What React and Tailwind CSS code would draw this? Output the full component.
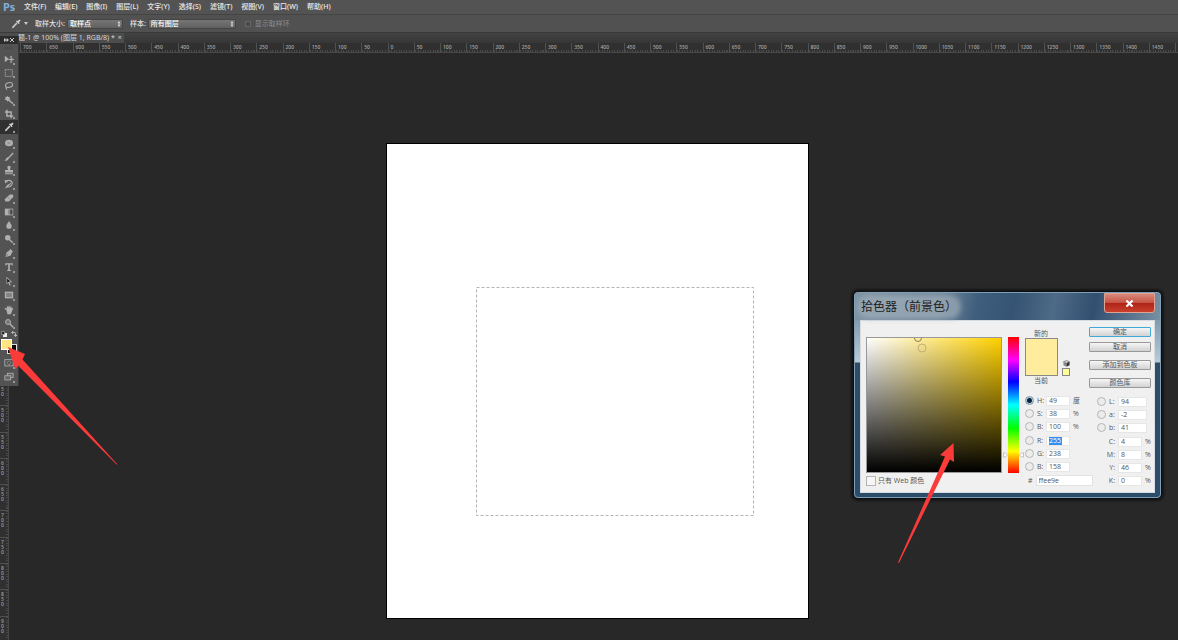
import React, { useState } from "react";

const menus = [
  "文件(F)",
  "编辑(E)",
  "图像(I)",
  "图层(L)",
  "文字(Y)",
  "选择(S)",
  "滤镜(T)",
  "视图(V)",
  "窗口(W)",
  "帮助(H)",
];

const toolGroups = [
  { size: "h-[82px]", tools: ["move", "marquee", "lasso", "wand", "crop", "eyedropper"] },
  {
    size: "h-[110px] mt-[2px]",
    tools: ["heal", "brush", "stamp", "history", "eraser", "gradient", "blur", "dodge"],
  },
  { size: "h-[56px]", tools: ["pen", "type", "path", "shape"] },
  { size: "h-[27px] mt-px", tools: ["hand", "zoom"] },
];

// 12x12 drawings, filled with currentColor unless they set their own stroke
const glyphs = {
  move: (
    <>
      <path d="M1 2v8l5-4z" />
      <path d="M8.500 3v6M5.500 6.500h6" stroke="currentColor" strokeWidth="1.300" />
      <path d="M8.500 2l1.500 2h-3zM8.500 11L7 9h3zM12 6.500L10 8V5z" />
    </>
  ),
  marquee: (
    <rect x="1.500" y="2" width="8.500" height="8" fill="none" stroke="currentColor" strokeDasharray="1.800 .8" />
  ),
  lasso: (
    <g fill="none" stroke="currentColor" strokeWidth="1.400">
      <ellipse cx="6" cy="4.800" rx="4.300" ry="2.800" transform="rotate(-14 6 4.800)" />
      <path d="M3 7c-1.500 1 .5 2 0 3.500" />
    </g>
  ),
  wand: (
    <>
      <path d="M5 5.500l6 5" stroke="currentColor" strokeWidth="1.700" />
      <path d="M4 .8l1 1.700 2-.4-.5 1.900L8 5.500l-2.200.2L4 8 3 6 .5 5.500 2 4 1.300 2.100l1.900.4z" />
    </>
  ),
  crop: (
    <path d="M3.500 1v7.500H11M1 3.500h7.500V11" fill="none" stroke="currentColor" strokeWidth="1.800" />
  ),
  eyedropper: (
    <>
      <path d="M7 1.800l1 .7L9.600 1c1.300-.6 2.200.5 1.500 1.500L9.500 4.200l.8 1-1 1-3.400-3.400z" />
      <path d="M7 5L2 10.200" stroke="currentColor" strokeWidth="1.900" />
      <path d="M1 11.300l.6-2 1.300 1.300z" />
    </>
  ),
  heal: (
    <>
      <ellipse cx="6" cy="6" rx="4.800" ry="4" />
      <path d="M4 4.800l4 2.400M4 7.200l4-2.400" stroke="#888" strokeWidth=".8" />
    </>
  ),
  brush: (
    <>
      <path d="M11 1.200L5 7.500" stroke="currentColor" strokeWidth="1.600" />
      <path d="M5.800 7.200C5.300 10.300 2.800 10.800.5 10.500 2.600 9.500 2 7 4.300 6.200z" />
    </>
  ),
  stamp: <path d="M6 .8c1.600 0 2.200 1.100 1.900 2.300L7.200 6h3.600v3H1.200V6h3.600l-.7-2.900C3.800 1.900 4.400.8 6 .8zM1.200 10h9.600v1.200H1.200z" />,
  history: (
    <>
      <path d="M2 3c2-2 6-1.800 7.500.5S8.500 9.500 5 9.500" fill="none" stroke="currentColor" strokeWidth="1.300" />
      <path d="M.8 1l.5 4.300 3.400-2.200zM11 3L5.500 8.500C5 10.500 3 11.300 1 11 3 10 2.500 8 4.300 7z" />
    </>
  ),
  eraser: (
    <>
      <path d="M7 1.800h3.700l.6 2.700-5.300 5.700H1.500L.8 7.500z" />
      <path d="M4.200 4.500l3 3.500" stroke="#777" strokeWidth=".7" />
    </>
  ),
  gradient: (
    <>
      <rect x="1" y="2" width="10" height="8" />
      <rect x="5" y="3" width="3" height="6" fill="#888" />
      <rect x="7.500" y="3" width="2.700" height="6" fill="#444" />
    </>
  ),
  blur: <path d="M6 1c.8 2.600 3.300 4 3.300 6.400C9.300 9.300 8 10.500 6 10.500S2.700 9.300 2.700 7.400C2.700 5 5.200 3.600 6 1z" />,
  dodge: (
    <>
      <circle cx="4.500" cy="4.500" r="3.300" />
      <path d="M6.500 6.500l4 4" stroke="currentColor" strokeWidth="1.700" />
    </>
  ),
  pen: (
    <>
      <path d="M7.500 1l3.500 3.500-1.500 1L8 9l-6.500 2L3.200 5 6.500 3z" />
      <path d="M1.500 11L5 7" stroke="#555" strokeWidth=".7" />
    </>
  ),
  type: <path d="M1.500 1.500h9v2.700h-1L9 3H7v6.500l1.500.5v.8h-5V10L5 9.500V3H3l-.5 1.200h-1z" />,
  path: (
    <>
      <path d="M3 1l7 6.500H6.800L8 11 6.500 11.500 5.200 8.200 3 10z" />
      <path d="M3.800 3l3.800 3.500L5.500 7l-1.700 1.500z" fill="#111" />
    </>
  ),
  shape: (
    <>
      <rect x="1" y="2" width="10" height="8" />
      <rect x="2.500" y="3.500" width="7" height="5" fill="#858585" />
    </>
  ),
  hand: (
    <path d="M2.800 6L1 4.700c-.5-1 .5-1.500 1.200-1l1.300.9L3.300 2c.2-.8 1-.8 1.300-.1L5 3.500l.3-2c.3-.7 1.200-.7 1.400 0L7 3.600l.9-1.800c.4-.5 1.200-.2 1.200.5L9 4.300l1-.8c.7-.2 1.200.4.9 1L9 9l-.6 2.200H4.200z" />
  ),
  zoom: (
    <>
      <circle cx="4.800" cy="4.800" r="3" fill="#777" stroke="currentColor" strokeWidth="1.200" />
      <path d="M7 7l4 4" stroke="currentColor" strokeWidth="1.800" />
    </>
  ),
  mask: (
    <>
      <rect x="1" y="2" width="10" height="7.500" fill="none" stroke="currentColor" />
      <circle cx="6" cy="5.800" r="2" fill="none" stroke="currentColor" strokeDasharray="1 .6" />
    </>
  ),
  screen: (
    <g fill="#666" stroke="currentColor">
      <rect x="4" y="1.500" width="7" height="5" />
      <rect x="1" y="4.500" width="7" height="5" />
    </g>
  ),
};

const Glyph = ({ name, className = "w-[10px] h-[10px]" }) => (
  <svg viewBox="0 0 12 12" fill="currentColor" className={className} aria-hidden="true">
    {glyphs[name]}
  </svg>
);

const Tool = ({ name, active, onClick }) => (
  <button
    aria-label={name}
    onClick={onClick}
    className={`relative flex-1 flex items-center justify-center ${
      active ? "bg-[#303030] text-[#d0d0d0]" : "text-[#b0b0b0]"
    }`}
  >
    <Glyph name={name} />
    <span className="absolute right-[3px] bottom-px size-[2px] bg-[#989898]" />
  </button>
);

const OptionSelect = ({ id, label, value, className }) => (
  <>
    <label htmlFor={id} className="shrink-0">
      {label}
    </label>
    <div className={`relative ml-[2px] shrink-0 ${className}`}>
      <select
        id={id}
        className="block w-full h-[10px] pl-[2px] appearance-none rounded-[1px] border border-[#454545] bg-linear-to-b from-[#767676] to-[#606060] text-[7px] leading-[8px] text-white"
      >
        <option>{value}</option>
      </select>
      <svg viewBox="0 0 4 6" className="absolute right-[2px] top-[2px] w-[4px] h-[6px] fill-[#ddd]">
        <path d="M2 0l1.500 2.500h-3zM2 6L.5 3.500h3z" />
      </svg>
    </div>
  </>
);

const OptionsBar = () => (
  <div className="flex items-center h-[19px] pl-[11px] border-t border-[#444] border-b border-b-[#3a3a3a] bg-[#515151] text-[7px] leading-[10px] font-medium text-[#e2e2e2]">
    <Glyph name="eyedropper" className="w-[10px] h-[10px] text-[#ccc]" />
    <svg viewBox="0 0 4 3" className="ml-[3px] mr-[7px] w-[4px] h-[3px] fill-[#ccc]">
      <path d="M0 0h4L2 3z" />
    </svg>
    <OptionSelect id="sample-size" label="取样大小:" value="取样点" className="w-[56px]" />
    <span className="w-[7px]" />
    <OptionSelect id="sample-from" label="样本:" value="所有图层" className="w-[88px]" />
    <label className="flex items-center gap-1 ml-[9px] text-[#8c8c8c] font-normal">
      <input
        type="checkbox"
        disabled
        className="appearance-none size-[6px] border border-[#666] bg-[#4a4a4a]"
      />
      显示取样环
    </label>
  </div>
);

const rulerMarks = Array.from({ length: 44 }, (_, i) => Math.abs(i * 50 - 700));

const TopRuler = () => (
  <div className="h-[10px] overflow-hidden border-b border-[#484848] bg-[#303030]">
    <div className="flex ml-5">
      {rulerMarks.map((mark, i) => (
        <div
          key={i}
          className="flex-1 h-[9px] pl-[2px] border-l border-[#505050] bg-[repeating-linear-gradient(90deg,#484848_0_1px,transparent_1px_10%)] bg-size-[100%_2px] bg-bottom bg-no-repeat text-[5px] leading-[8px] font-medium text-[#a8a8a8]"
        >
          {mark}
        </div>
      ))}
      <div className="w-[3px] border-l border-[#505050]" />
    </div>
  </div>
);

const sideMarks = [450, 500, 550, 600, 650, 700, 750, 800, 850, 900];

const SideRuler = () => (
  <div className="flex flex-col w-[9px] h-full pt-[326px] overflow-hidden border-r border-[#484848] bg-[#303030]">
    <div className="flex flex-col h-[263px] shrink-0">
      {sideMarks.map((mark) => (
        <div
          key={mark}
          className="flex-1 pl-px pt-[2px] border-t border-[#505050] bg-[repeating-linear-gradient(180deg,#484848_0_1px,transparent_1px_10%)] bg-size-[2px_100%] bg-right bg-no-repeat text-[5px] leading-[5px] font-medium text-[#a0a0a0]"
        >
          {String(mark)
            .split("")
            .map((digit, i) => (
              <div key={i}>{digit}</div>
            ))}
        </div>
      ))}
    </div>
  </div>
);

const Toolbox = () => {
  const [active, setActive] = useState("eyedropper");

  return (
    <div className="absolute left-0 top-[36px] z-10 flex flex-col w-[19px] h-[350px] border-r border-[#3a3a3a] bg-[#535353]">
      <div className="flex items-center justify-between h-[8px] px-1 bg-[#2c2c2c] text-[#c8c8c8]">
        <svg viewBox="0 0 5 4" className="w-[5px] h-[4px] fill-current">
          <path d="M0 0l2.500 2L0 4zM2.500 0L5 2 2.500 4z" />
        </svg>
        <svg viewBox="0 0 4 4" className="w-[4px] h-[4px] stroke-current">
          <path d="M0 0l4 4M4 0L0 4" />
        </svg>
      </div>
      <div className="h-[8px] pt-[3px] px-[5px]">
        <div className="h-[2px] bg-[repeating-linear-gradient(90deg,#444_0_1px,transparent_1px_2px)]" />
      </div>
      {toolGroups.map((group) => (
        <div key={group.tools[0]} className={`flex flex-col shrink-0 ${group.size}`}>
          {group.tools.map((name) => (
            <Tool key={name} name={name} active={name === active} onClick={() => setActive(name)} />
          ))}
        </div>
      ))}
      <div className="flex justify-between h-[8px] pt-px px-px text-[#c4c4c4]">
        <svg viewBox="0 0 6 6" className="size-[6px]">
          <path d="M2 2h4v4H2z" fill="#eee" />
          <path d="M.5.5h3v3h-3z" fill="#222" stroke="#aaa" strokeWidth=".7" />
        </svg>
        <svg viewBox="0 0 6 6" className="size-[6px] fill-none stroke-current">
          <path d="M1 1.500h2.500q1 0 1 1V5M2.200 0L.7 1.500 2.200 3M3 4l1.500 1.500L6 4" strokeWidth=".9" />
        </svg>
      </div>
      <div className="relative h-[17px]">
        <button aria-label="背景色" className="absolute left-[7px] top-[6px] size-[10px] border border-[#ddd] bg-[#0c0c0c]" />
        <button aria-label="前景色" className="absolute left-px top-px size-[11px] border border-white bg-[#ffe682]" />
      </div>
      <div className="flex flex-col flex-1 pt-px pb-[2px]">
        <Tool name="mask" />
        <Tool name="screen" />
      </div>
    </div>
  );
};

const DialogButton = ({ children, primary, className = "" }) => (
  <button
    className={`h-[10px] rounded-[1px] border bg-linear-to-b from-[#f6f6f6] to-[#d2d2d2] text-[7px] leading-[8px] ${
      primary ? "border-[#3fa9d8]" : "border-[#999]"
    } ${className}`}
  >
    {children}
  </button>
);

const ChannelField = ({ id, label, value, unit, radio = true, wide, checked, selected }) => (
  <div className="flex items-center h-[13px]">
    {radio && (
      <input
        type="radio"
        name="channel"
        aria-label={label}
        defaultChecked={checked}
        className="appearance-none size-[9px] shrink-0 rounded-full border border-[#b5b5b5] bg-[#ececec] checked:border-[#8598a8] checked:bg-[radial-gradient(#123_0_2px,#a5d0e2_3px)]"
      />
    )}
    <label htmlFor={id} className={radio ? "w-[12px] pl-[3px]" : "w-[21px] text-right pr-[3px]"}>
      {label}:
    </label>
    <div
      className={`flex items-center h-[10px] px-[2px] shrink-0 border border-[#e6e6e6] bg-white ${
        wide ? "w-[29px]" : "w-[24px]"
      }`}
    >
      <input
        id={id}
        defaultValue={value}
        className={`h-[8px] text-[7px] leading-[8px] ${selected ? "w-[13px] bg-[#3390ee] text-white" : "w-full"}`}
      />
    </div>
    <span className="pl-[3px]">{unit}</span>
  </div>
);

const ColorPicker = () => (
  <section className="absolute left-[853px] top-[291px] w-[309px] h-[208px] rounded-[5px] border border-[#0c0f12] bg-[linear-gradient(180deg,#62798c_0,#b9cbd8_70px,#304b65_71px,#2c4d69_100%)] shadow-[0_0_2px_2px_#161616] font-['Open_Sans','Noto_Sans_CJK_SC',sans-serif] text-[7px] leading-[8px] text-[#555]">
    <div className="h-full rounded-[4px] border border-[#7f9fb6] px-[5px]">
      <header className="flex items-start justify-between h-[27px] -mx-[5px] pl-[5px] rounded-t-[3px] bg-[linear-gradient(100deg,#7d92a2_0,#6f8799_28%,#3f5e7d_40%,#355373_52%,#4e6a87_65%,#334f70_78%,#7890a3_100%)]">
        <h2 className="mt-[5px] px-px rounded-lg bg-[#a5b3be]/60 shadow-[0_0_5px_3px_rgba(165,179,190,0.6)] text-[12px] leading-[18px] text-[#222]">
          拾色器（前景色）
        </h2>
        <button
          aria-label="关闭"
          className="flex items-center justify-center w-[51px] h-[20px] mr-[5px] rounded-b-[3px] border border-[#e0a295] bg-[linear-gradient(180deg,#d98a7c_0,#c65445_48%,#ae2317_50%,#c9402c_100%)]"
        >
          <svg viewBox="0 0 10 8" className="w-[9px] h-[7px] stroke-white">
            <path d="M1.500.500l7 7M8.500.500l-7 7" strokeWidth="2.400" />
          </svg>
        </button>
      </header>

      <div className="flex h-[173px] px-[5px] border border-[#d5dde3] bg-[#f0f0f0]">
        <div className="w-[136px] shrink-0">
          <div className="mt-4 h-[136px] border border-[#999] bg-[linear-gradient(to_top,#000,transparent),linear-gradient(to_right,#fff,#ffd100)] overflow-hidden">
            <svg viewBox="0 0 134 134" className="block size-full fill-none">
              <circle cx="51" cy="0" r="3.500" stroke="#8a8154" />
              <circle cx="55" cy="10" r="4" stroke="#c4ae76" />
            </svg>
          </div>
          <label className="flex items-center gap-[2px] mt-[3px]">
            <input type="checkbox" className="appearance-none size-[10px] border border-[#b5b5b5] bg-[#f6f6f6]" />
            只有 Web 颜色
          </label>
        </div>

        <div className="relative shrink-0 mt-4 ml-[6px] w-[11px] h-[136px] bg-[linear-gradient(to_bottom,#f00,#f0f_17%,#00f_33%,#0ff_50%,#0f0_67%,#ff0_84%,#f00)]">
          <svg viewBox="0 0 21 6" className="absolute -left-[5px] bottom-[15px] w-[21px] h-[6px] fill-white stroke-[#aaa]">
            <path d="M.5 1h2l2 2-2 2h-2zM20.500 1h-2l-2 2 2 2h2z" strokeWidth=".7" />
          </svg>
        </div>

        <div className="shrink-0 ml-[6px] w-[64px] pt-[9px]">
          <div className="w-[32px] text-center">新的</div>
          <div className="flex items-end gap-1">
            <div className="w-[33px] h-[38px] border border-[#8a8a8a] bg-[#ffec9c]" />
            <div className="flex flex-col items-center gap-px">
              <svg viewBox="0 0 8 8" className="size-[7px]">
                <path d="M4 .5L7.500 2 4 3.700.5 2z" fill="#ccc" stroke="#555" strokeWidth=".6" />
                <path d="M.5 2L4 3.700v4L.5 6z" fill="#888" />
                <path d="M7.500 2L4 3.700v4L7.500 6z" fill="#333" />
              </svg>
              <button aria-label="Web 安全色" className="size-[8px] border border-[#888] bg-[#ffff99]" />
            </div>
          </div>
          <div className="w-[32px] mt-px text-center">当前</div>
          <div className="mt-[9px]">
            <ChannelField id="h" label="H" value="49" unit="度" checked />
            <ChannelField id="s" label="S" value="38" unit="%" />
            <ChannelField id="b" label="B" value="100" unit="%" />
          </div>
          <div className="mt-px">
            <ChannelField id="r" label="R" value="255" selected />
            <ChannelField id="g" label="G" value="238" />
            <ChannelField id="bl" label="B" value="158" />
          </div>
          <div className="flex items-center gap-[3px] mt-[2px] pl-[3px]">
            <label htmlFor="hex">#</label>
            <input
              id="hex"
              defaultValue="ffee9e"
              className="w-[57px] h-[11px] shrink-0 px-[2px] border border-[#e2e2e2] bg-white"
            />
          </div>
        </div>

        <div className="flex flex-col flex-1 pt-[6px]">
          <DialogButton primary>确定</DialogButton>
          <DialogButton className="mt-[5px]">取消</DialogButton>
          <DialogButton className="mt-2">添加到色板</DialogButton>
          <DialogButton className="mt-2">颜色库</DialogButton>
          <div className="mt-[7px] ml-2">
            <ChannelField id="lab-l" label="L" value="94" wide />
            <ChannelField id="lab-a" label="a" value="-2" wide />
            <ChannelField id="lab-b" label="b" value="41" wide />
          </div>
          <div className="mt-px ml-2">
            <ChannelField id="c" label="C" value="4" unit="%" radio={false} />
            <ChannelField id="m" label="M" value="8" unit="%" radio={false} />
            <ChannelField id="y" label="Y" value="46" unit="%" radio={false} />
            <ChannelField id="k" label="K" value="0" unit="%" radio={false} />
          </div>
        </div>
      </div>
    </div>
  </section>
);

const App = () => {
  return (
    <div className="relative flex flex-col h-screen overflow-hidden bg-[#282828] font-['Noto_Sans','Noto_Sans_CJK_SC',sans-serif]">
      <nav className="flex items-center h-[14px] pl-[3px] bg-[#535353]">
        <span className="w-[21px] text-[11px] leading-[14px] font-bold text-[#7fb0d8]">Ps</span>
        <div className="flex gap-[9px]">
          {menus.map((item) => (
            <button key={item} className="text-[7px] leading-[14px] font-medium text-[#ececec]">
              {item}
            </button>
          ))}
        </div>
      </nav>
      <OptionsBar />
      <div className="flex h-[10px] bg-linear-to-b from-[#434343] to-[#363636]">
        <div className="flex items-center gap-[3px] pl-[18px] pr-[2px] bg-[#4d4d4d] text-[7px] leading-[10px] text-[#d8d8d8]">
          题-1 @ 100% (图层 1, RGB/8) *
          <button aria-label="关闭文档">×</button>
        </div>
      </div>
      <TopRuler />
      <main className="flex-1 min-h-0">
        <SideRuler />
      </main>

      <Toolbox />

      <div className="absolute left-[387px] top-[144px] w-[421px] h-[474px] bg-white outline outline-black">
        <svg className="absolute left-[89px] top-[143px] w-[279px] h-[230px]">
          <rect x=".5" y=".5" width="277" height="228" fill="none" stroke="#b4b4b4" strokeDasharray="3 2" />
        </svg>
      </div>

      <ColorPicker />

      {/* callout arrows */}
      <svg className="absolute left-0 top-[340px] z-20 w-[120px] h-[126px] fill-[#fb3a3a] pointer-events-none">
        <path d="M8 7L25 14L22.500 19.500L117.500 124.500L116.500 124.500L18 25.500L15.500 29.500Z" />
      </svg>
      <svg className="absolute left-[895px] top-[440px] z-20 w-[64px] h-[126px] fill-[#fb3a3a] pointer-events-none">
        <path d="M58.500 3L45 15L50 16.500L3 122.500L4 123L55 19.500L59 22Z" />
      </svg>
    </div>
  );
};

export default App;
